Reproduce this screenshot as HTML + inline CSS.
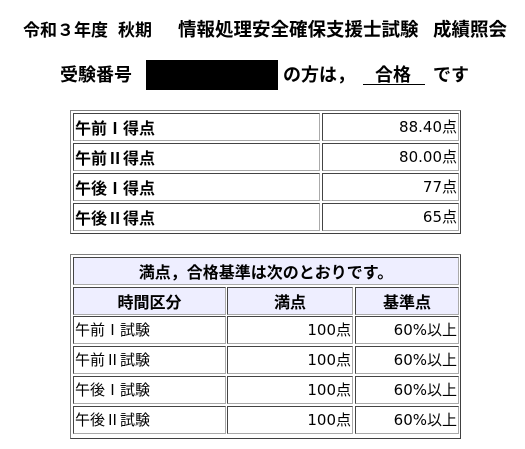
<!DOCTYPE html>
<html><head><meta charset="utf-8"><style>
body{margin:0;width:525px;height:449px;background:#fff;position:relative;font-family:"Liberation Sans","Noto Sans CJK JP",sans-serif;color:#000;overflow:hidden}
.a{position:absolute;white-space:nowrap;line-height:1}
.t{font-weight:bold;font-size:17px;top:22px}
.l{font-weight:bold;font-size:18px;top:66px}
.box{position:absolute;border:1px solid #808080;border-right-color:#404040;border-bottom-color:#404040}
.c{position:absolute;border:1px solid #444;border-right-color:#aaa;border-bottom-color:#aaa;box-sizing:border-box;font-family:"DejaVu Sans","Noto Sans CJK JP",sans-serif;font-size:15px;line-height:26px;padding:0 1px;white-space:nowrap}
.b{font-weight:bold;font-family:"Noto Sans CJK JP",sans-serif;font-size:16px}
.r{text-align:right}
.h{background:#eeeeff;text-align:center;font-weight:bold;font-family:"Noto Sans CJK JP",sans-serif;font-size:16px}
.n{font-family:"Noto Sans CJK JP",sans-serif}
</style></head><body>
<div class="a t" style="left:23px">令和３年度</div>
<div class="a t" style="left:118px">秋期</div>
<div class="a t" style="left:178px;font-size:18.5px;top:21px">情報処理安全確保支援士試験</div>
<div class="a t" style="left:433px;font-size:18.5px;top:21px">成績照会</div>
<div class="a l" style="left:60px">受験番号</div>
<div style="position:absolute;left:146px;top:60px;width:132px;height:30px;background:#000"></div>
<div class="a l" style="left:283px">の方は，</div>
<div class="a l" style="left:375px">合格</div>
<div style="position:absolute;left:363px;top:84px;width:62px;height:1px;background:#000"></div>
<div class="a l" style="left:433px">です</div>

<div class="box" style="left:70px;top:110px;width:389px;height:122px"></div>
<div class="c b" style="left:73px;top:113px;width:247px;height:28px">午前Ⅰ得点</div>
<div class="c r" style="left:322px;top:113px;width:137px;height:28px">88.40点</div>
<div class="c b" style="left:73px;top:143px;width:247px;height:28px">午前Ⅱ得点</div>
<div class="c r" style="left:322px;top:143px;width:137px;height:28px">80.00点</div>
<div class="c b" style="left:73px;top:173px;width:247px;height:28px">午後Ⅰ得点</div>
<div class="c r" style="left:322px;top:173px;width:137px;height:28px">77点</div>
<div class="c b" style="left:73px;top:203px;width:247px;height:28px">午後Ⅱ得点</div>
<div class="c r" style="left:322px;top:203px;width:137px;height:28px">65点</div>

<div class="box" style="left:70px;top:254px;width:389px;height:183px"></div>
<div class="c h" style="left:73px;top:257px;width:386px;height:28px">満点，合格基準は次のとおりです。</div>
<div class="c h" style="left:73px;top:287px;width:153px;height:28px">時間区分</div>
<div class="c h" style="left:227px;top:287px;width:126px;height:28px">満点</div>
<div class="c h" style="left:355px;top:287px;width:104px;height:28px">基準点</div>

<div class="c" style="left:73px;top:316px;width:153px;height:28px">午前<span class="n">Ⅰ</span>試験</div>
<div class="c r" style="left:227px;top:316px;width:126px;height:28px">100点</div>
<div class="c r" style="left:355px;top:316px;width:104px;height:28px">60%以上</div>
<div class="c" style="left:73px;top:346px;width:153px;height:28px">午前<span class="n">Ⅱ</span>試験</div>
<div class="c r" style="left:227px;top:346px;width:126px;height:28px">100点</div>
<div class="c r" style="left:355px;top:346px;width:104px;height:28px">60%以上</div>
<div class="c" style="left:73px;top:376px;width:153px;height:28px">午後<span class="n">Ⅰ</span>試験</div>
<div class="c r" style="left:227px;top:376px;width:126px;height:28px">100点</div>
<div class="c r" style="left:355px;top:376px;width:104px;height:28px">60%以上</div>
<div class="c" style="left:73px;top:406px;width:153px;height:28px">午後<span class="n">Ⅱ</span>試験</div>
<div class="c r" style="left:227px;top:406px;width:126px;height:28px">100点</div>
<div class="c r" style="left:355px;top:406px;width:104px;height:28px">60%以上</div>
</body></html>
